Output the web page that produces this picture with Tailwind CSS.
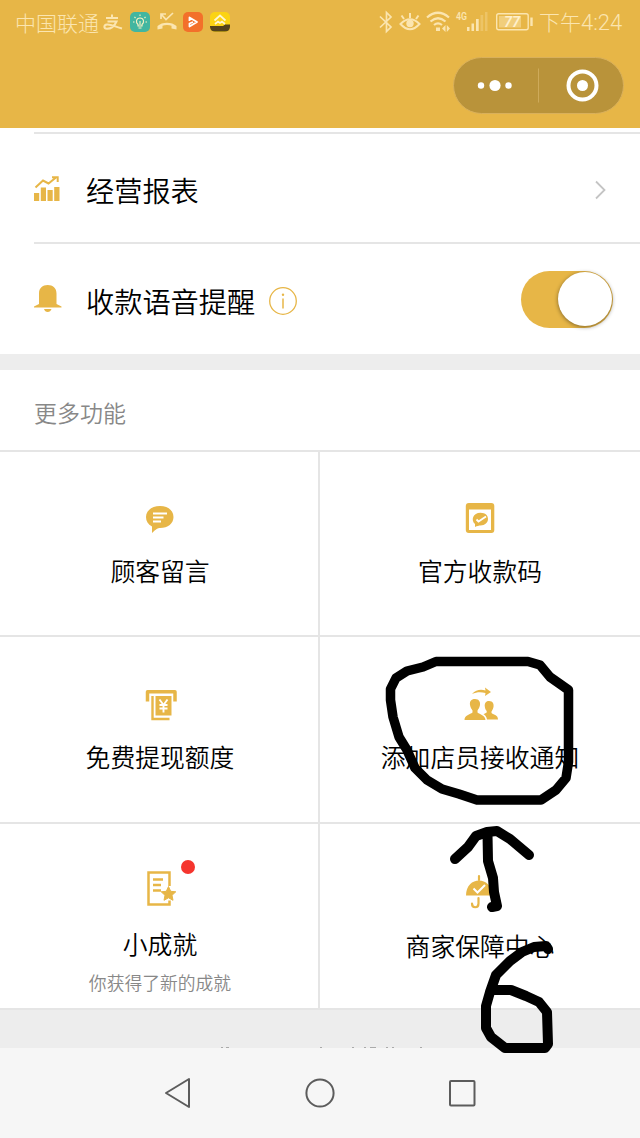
<!DOCTYPE html>
<html lang="zh-CN">
<head>
<meta charset="utf-8">
<meta name="viewport" content="width=device-width, initial-scale=1">
<title>收款小账本</title>
<script src="https://cdn.jsdelivr.net/npm/@tailwindcss/browser@4"></script>
</head>
<body class="bg-white">
<div class="relative flex h-[1138px] w-[640px] flex-col overflow-hidden bg-white font-['Noto_Sans_CJK_SC',sans-serif] font-[350] text-black">

  <header class="flex h-32 flex-none flex-col bg-[#e7b647]">
    <div class="flex h-[44px] items-center pl-[15px] pr-[17px] text-[21px] leading-none text-[#fbe5b0]">
      <span class="w-[84px] font-light whitespace-nowrap">中国联通</span>
      <svg class="ml-[4px] h-5 w-5" viewBox="0 0 20 20" fill="none" stroke="#fbe5b0" stroke-width="2"><path d="M3 6H15M9 2.500V6M4.500 9.500H13.500C11.500 14 7.500 16.800 4 16.800C.500 16.800 .500 13 4 12.600C8.500 12.300 12.500 15 19 16.500"/></svg>
      <svg class="ml-[7px] h-5 w-5" viewBox="0 0 20 20"><rect width="20" height="20" rx="5" fill="#42b6a0"/><g fill="none" stroke="#fff3c4" stroke-width="1.1"><path d="M8 14V12.5C5.500 10.500 6 6 10 6S14.500 10.500 12 12.500V14ZM8.500 16H11.500M10 9V13M10 2.500V4M4.500 5L5.500 6M15.500 5L14.500 6M3 10H4.500M15.500 10H17"/></g></svg>
      <svg class="ml-[7px] h-5 w-5" viewBox="0 0 20 20" fill="none" stroke="#fbe5b0"><path stroke-width="1.700" d="M4 7V2H9M4.500 2.500L9 7.500L16 1"/><path fill="#fbe5b0" stroke="none" d="M.5 17.500V14C5 9.500 15 9.500 19.500 14V17.500L14.500 16.500V13.800C12 12.800 8 12.800 5.500 13.800V16.500Z"/></svg>
      <svg class="ml-[6px] h-5 w-5" viewBox="0 0 20 20"><rect width="20" height="20" rx="5" fill="#f3702a"/><path d="M6.500 9V5.500L14 10L6.500 14.500V11.500L10 10" fill="none" stroke="#fff" stroke-width="1.800" stroke-linejoin="round"/></svg>
      <svg class="ml-[7px] h-5 w-5" viewBox="0 0 20 20"><rect width="20" height="20" rx="5" fill="#fbd313"/><path d="M0 14H13L15 12.500H20V15Q19.500 19.500 15 19.500H5Q.5 19.500 0 15Z" fill="#55431c"/><path d="M4.500 8.500L10 3.500L15.500 8.500M5 12L8 9.500L10 11L12 9.500L15 12" fill="none" stroke="#fff6d0" stroke-width="1.700"/></svg>

      <div class="ml-auto flex h-[24px] items-center">
        <svg class="h-[24px] w-[163px]" viewBox="376 10 163 24" fill="none" stroke="#fbe5b0">
          <path stroke-width="1.700" d="M380 16.500L391 27L386.500 31.500V12.500L391 17L380 27.500"/>
          <path stroke-width="2" d="M400.500 24Q410 14.500 419.500 24Q410 34.500 400.500 24ZM410 18V13M404 19L401.500 15.500M416 19L418.500 15.500"/><circle cx="410" cy="23.500" r="3.700" fill="#fbe5b0" stroke="none"/>
          <path stroke-width="2.200" d="M427 17.500Q438 8 449 17.500M430.500 21.500Q438 15 445.500 21.500M434 25Q438 21.800 442 25"/><path fill="#fbe5b0" stroke="none" d="M436 27.500H440V31H436ZM445.500 25V32L442 28.500ZM446.800 25V32L450 28.500Z"/>
          <g fill="#fbe5b0" stroke="none"><rect x="467" y="27" width="2.500" height="4"/><rect x="471.500" y="23.500" width="2.500" height="7.500"/><rect x="476" y="19" width="2.700" height="12"/><rect x="480.500" y="15" width="2.700" height="16" opacity=".3"/><rect x="485" y="12" width="2.500" height="19" opacity=".3"/></g>
          <rect x="496.700" y="13.700" width="31.500" height="16" rx="2" stroke-width="1.400"/><rect x="499" y="16" width="22" height="11.500" fill="#fbe5b0" opacity=".5" stroke="none"/><path stroke-width="2.400" d="M531.500 17.500V26"/>
          <text x="456" y="20" font-family="Roboto" font-size="10" font-weight="600" textLength="11" lengthAdjust="spacingAndGlyphs" fill="#fbe5b0" stroke="none">4G</text>
          <text x="504" y="27" font-family="Roboto" font-size="14.500" font-weight="600" font-style="italic" fill="#fff0cc" stroke="none">77</text>
        </svg>
        <span class="w-[84px] font-light whitespace-nowrap text-[21px]">下午<span class="font-[Roboto] text-[22px] font-light">4:24</span></span>
      </div>
    </div>
    <div class="mt-[13px] mr-[16px] flex h-[57px] w-[171px] items-center self-end rounded-full border border-[#d9b05b] bg-[#b9933a]">
      <svg class="h-full w-full" viewBox="0 0 169 55"><g fill="#fff"><circle cx="27" cy="27.500" r="3.200"/><circle cx="41" cy="27.500" r="5.600"/><circle cx="54.500" cy="27.500" r="3.200"/><circle cx="128.500" cy="27.500" r="5.500"/></g><circle cx="128.500" cy="27.500" r="14" fill="none" stroke="#fff" stroke-width="4"/><path d="M84.500 10.500V44.500" stroke="#ceaa5a" stroke-width="1"/></svg>
    </div>
  </header>

  <section class="flex-none pt-1 pl-[34px]">
    <div class="flex h-[110px] items-center border-t-2 border-[#e5e5e5] pr-[34px] pt-[3px]">
      <svg class="mb-[2px] h-[26px] w-[26px]" viewBox="0 0 26 26" fill="#e7b647"><path d="M0 17H5.200V25H0ZM6.800 11.500H12V25H6.800ZM13.500 14H18.700V25H13.500ZM20.200 11H25.500V25H20.200Z"/><path fill="none" stroke="#e7b647" stroke-width="2" d="M1.500 11.500L9 4.500L14.500 7.500L22 1.500M18 1.200H23.700V6"/></svg>
      <span class="ml-[26px] text-[28.2px] leading-10">经营报表</span>
      <svg class="mt-px ml-auto h-[20px] w-[11px]" viewBox="0 0 11 20" fill="none" stroke="#c4c4c4" stroke-width="1.800"><path d="M1 1.500L9.500 10L1 18.500"/></svg>
    </div>
    <div class="flex h-[112px] items-center border-t-2 border-[#e5e5e5] pr-[27px] pt-[3px]">
      <svg class="mb-[5px] h-[28px] w-[28px]" viewBox="0 0 28 28" fill="#e7b647"><path d="M5 20V9.500C5 4 8.500 1 13.700 1S22.500 4 22.500 9.500V20L27.500 22.500V23.500H0V22.500ZM10 25H17.500Q16.500 28 13.700 28T10 25Z"/></svg>
      <span class="ml-[24px] text-[28.2px] leading-10">收款语音提醒</span>
      <svg class="ml-[14px] h-[28px] w-[28px]" viewBox="0 0 28 28"><circle cx="14" cy="14" r="13.300" fill="none" stroke="#e7b647" stroke-width="1.300"/><path d="M14 11.500V21.500" stroke="#e7b647" stroke-width="1.500"/><circle cx="14" cy="7.700" r="1.200" fill="#e7b647"/></svg>
      <div class="mb-[3px] ml-auto flex h-[57px] w-[92px] items-center justify-end rounded-full bg-[#e7b647] pr-px"><div class="h-[54px] w-[54px] rounded-full bg-white shadow-[0_1px_4px_rgba(0,0,0,0.45)]"></div></div>
    </div>
  </section>

  <div class="h-4 flex-none bg-[#ededed]"></div>
  <h2 class="flex h-[82px] flex-none items-center border-b-2 border-[#e5e5e5] pt-[5px] pl-[34px] text-[23px] text-[#888]">更多功能</h2>

  <main class="grid flex-none grid-cols-[320px_320px] grid-rows-[185px_187px_186px] text-center text-[24.8px] leading-9">
    <div class="flex flex-col items-center border-r-2 border-b-2 border-[#e5e5e5] pt-[52px] pl-[2px]">
      <svg class="h-[30px] w-[30px]" viewBox="0 0 30 30"><path d="M15 2C23 2 28.500 6.500 28.500 13S23 24 15 24C13 24 11 25 7 29V22.500C3 20.500 1 17 1 13C1 6.500 7 2 15 2Z" fill="#e7b647"/><path d="M8 9.500H22M8 13.500H18.500M8 17.500H16" stroke="#fff" stroke-width="2"/></svg>
      <span class="mt-[18px]">顾客留言</span>
    </div>
    <div class="flex flex-col items-center border-b-2 border-[#e5e5e5] pt-[50px]">
      <svg class="h-[32px] w-[30px]" viewBox="0 0 30 32"><rect x=".8" y="1" width="28.500" height="30" rx="3" fill="#e7b647"/><path d="M4 7.500H26V28H4Z" fill="#fff"/><path d="M15.500 10.700C20.500 10.700 23 13.500 23 17S20 23.500 15.500 23.500C14 23.500 12 24 10 25V22C5.500 18 8 10.700 15.500 10.700Z" fill="#e7b647"/><path d="M11.500 17.500L13.500 19.500L21 14.500" fill="none" stroke="#fff" stroke-width="1.800"/></svg>
      <span class="mt-[18px]">官方收款码</span>
    </div>
    <div class="flex flex-col items-center border-r-2 border-b-2 border-[#e5e5e5] pt-[52px] pl-[2px]">
      <svg class="ml-[2px] h-[32px] w-[32px]" viewBox="0 0 32 32"><path d="M2.500 12.500V2.800H30V12.500" fill="none" stroke="#e7b647" stroke-width="3.500" stroke-linejoin="round"/><path d="M7.500 7V30H24.500" fill="none" stroke="#e7b647" stroke-width="2.400"/><path d="M10.500 7H26.500V26.500H10.500Z" fill="#e7b647"/><path d="M14.500 10.500L18.500 16L22.500 10.500M18.500 16V23.500M14.500 16H22.500M14.500 19.500H22.500" fill="none" stroke="#fff" stroke-width="1.900"/></svg>
      <span class="mt-[17px]">免费提现额度</span>
    </div>
    <div class="flex flex-col items-center border-b-2 border-[#e5e5e5] pt-[50px]">
      <svg class="ml-[1px] h-[36px] w-[36px]" viewBox="0 0 36 36" fill="#e7b647"><path d="M9 7C13 2.500 18 2 22.500 3.500L22 .500L28 5L22 9L22.500 6C17.500 4.500 13.500 5 9 7Z"/><path d="M12 12C16 12 17.500 15 17 18C16.500 20.500 15.500 22 14.500 23.500V25.500C17 27.500 22 28 22.500 33H1.500C1.500 28 7 27.500 9.500 25.500V23.500C8.500 22 7.500 20.500 7 18C6.500 14.500 8 12 12 12ZM26 14C30 14 31 17 30.500 20C30 22.500 29 23.500 28.500 24.500V26C31 28 35 28 35 32.500H24C23.500 29 21.500 28 20.500 27.300L23.700 25.500V24C22.500 22.500 22 21.500 21.800 19.500C21.500 16.500 22.500 14 26 14Z"/></svg>
      <span class="mt-[15px]">添加店员接收通知</span>
    </div>
    <div class="relative flex flex-col items-center border-r-2 border-b-2 border-[#e5e5e5] pt-[46px] pl-[2px]">
      <i class="absolute top-[36px] left-[181px] h-[14px] w-[14px] rounded-full bg-[#f5352e]"></i>
      <svg class="ml-[2px] h-[36px] w-[32px]" viewBox="0 0 32 36" fill="none" stroke="#e7b647"><path stroke-width="2.500" d="M24.500 16V2.500H3.500V34.500H24.500V30.500"/><path stroke-width="2.300" d="M8 9.500H18M8 15H16M8 20.500H16"/><path fill="#e7b647" stroke="#e7b647" stroke-width="1" stroke-linejoin="round" d="M23.500 16.500L25.700 21.300L30.800 21.800L27 25.300L28 30.300L23.500 27.800L19 30.300L20 25.300L16.200 21.800L21.300 21.300Z"/></svg>
      <span class="mt-[19px]">小成就</span>
      <span class="mt-[8px] text-[17.8px] leading-[26px] text-[#888]">你获得了新的成就</span>
    </div>
    <div class="flex flex-col items-center border-b-2 border-[#e5e5e5] pt-[50px]">
      <svg class="mr-[2px] h-[36px] w-[28px]" viewBox="0 0 28 36" fill="none" stroke="#e7b647" stroke-width="2.200"><path d="M14 2V6M13.500 24V29.500C13.500 34.500 7 34.500 7 29.500" stroke-linecap="round"/><path d="M1 21.500C1 1.500 27 1.500 27 21.500Z" fill="#e7b647" stroke="none"/><path d="M8.500 14.500L12.500 18.500L20 11" stroke="#fff" stroke-width="2"/></svg>
      <span class="mt-[17px]">商家保障中心</span>
    </div>
  </main>

  <div class="h-[38px] flex-none bg-[#ededed]">
    <svg class="block h-full w-full" viewBox="0 1010 640 38" preserveAspectRatio="none" stroke="#aaa" stroke-width="1.200"><path d="M221 1047.500H223M226 1047.500H229M320 1047.500H322M352 1047.500H354M364 1047.500H366M370 1047.500H376M386 1047.500H388M392 1047.500H394M420 1047.500H422"/></svg>
  </div>
  <nav class="flex h-[90px] flex-none items-center justify-center bg-[#f6f6f6]">
    <svg class="h-full w-full" viewBox="0 0 640 90" fill="none" stroke="#5c5c5c" stroke-width="2" stroke-linejoin="round"><path d="M189 31V59L166 45Z"/><circle cx="320" cy="45" r="13.600"/><rect x="450" y="33" width="24.500" height="24.500" rx="1"/></svg>
  </nav>

  <svg class="pointer-events-none absolute inset-0 h-full w-full" viewBox="0 0 640 1138" fill="none" stroke="#000" stroke-linecap="round" stroke-linejoin="round">
    <path stroke-width="9.500" d="M436 661.500H528L540 665L550 677L560 684L568.500 690V762L566 778L556 790L541 800H477L459 794L442 789L427 780L415 768L407 750L399 737L393 717L390.500 700V689L396 678L407 671L423 667Z"/>
    <path stroke-width="10" d="M455 859L468 847L476 836L487 832L497 831L510 839L529 855M487.500 834L488 861L493 878L494 892L497 906L492 907"/>
    <path stroke-width="10" d="M548 949L546 946L534 947L522 952L510 961L496 975L490 992L486 1006V1028L491 1037L505 1048H545L548 1044L547 1012L539 1002L526 996L511 990H495"/>
  </svg>
</div>
</body>
</html>
